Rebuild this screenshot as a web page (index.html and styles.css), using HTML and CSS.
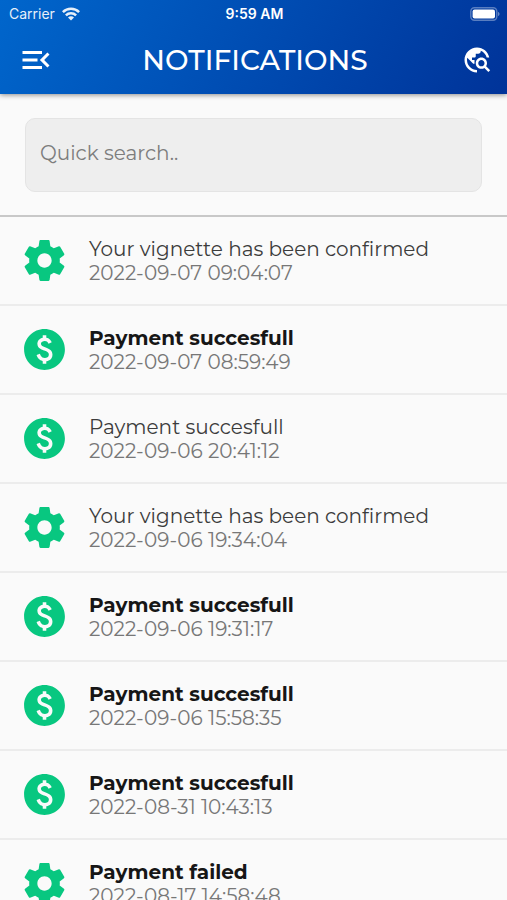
FILE: index.html
```html
<!DOCTYPE html>
<html lang="en">
<head>
<meta charset="utf-8">
<meta name="viewport" content="width=device-width, initial-scale=1">
<title>Notifications</title>
<link rel="stylesheet" href="styles.css">
</head>
<body>
<svg class="sprite" aria-hidden="true">
  <symbol id="gear" viewBox="0 0 24 24"><path d="M19.43 12.98c.04-.32.07-.64.07-.98s-.03-.66-.07-.98l2.11-1.65c.19-.15.24-.42.12-.64l-2-3.46c-.12-.22-.39-.3-.61-.22l-2.49 1c-.52-.4-1.08-.73-1.69-.98l-.38-2.65C14.46 2.18 14.25 2 14 2h-4c-.25 0-.46.18-.49.42l-.38 2.65c-.61.25-1.17.59-1.69.98l-2.49-1c-.23-.09-.49 0-.61.22l-2 3.46c-.13.22-.07.49.12.64l2.11 1.65c-.04.32-.07.65-.07.98s.03.66.07.98l-2.11 1.65c-.19.15-.24.42-.12.64l2 3.46c.12.22.39.3.61.22l2.49-1c.52.4 1.08.73 1.69.98l.38 2.65c.03.24.24.42.49.42h4c.25 0 .46-.18.49-.42l.38-2.65c.61-.25 1.17-.59 1.69-.98l2.49 1c.23.09.49 0 .61-.22l2-3.46c.12-.22.07-.49-.12-.64l-2.11-1.65zM12 15.5c-1.93 0-3.5-1.57-3.5-3.5s1.57-3.5 3.5-3.5 3.5 1.57 3.5 3.5-1.57 3.5-3.5 3.5z"/></symbol>
  <symbol id="paid" viewBox="0 0 24 24"><path d="M12 2C6.48 2 2 6.48 2 12s4.48 10 10 10 10-4.48 10-10S17.52 2 12 2zm.88 15.76V19h-1.75v-1.29c-.74-.18-2.39-.77-3.02-2.96l1.65-.67c.06.22.58 2.09 2.4 2.09.93 0 1.98-.48 1.98-1.61 0-.96-.7-1.46-2.28-2.03-1.1-.39-3.35-1.03-3.35-3.31 0-.1.01-2.4 2.62-2.96V5h1.75v1.24c1.84.32 2.51 1.79 2.66 2.23l-1.58.67c-.11-.35-.59-1.34-1.9-1.34-.7 0-1.81.37-1.81 1.39 0 .95.86 1.31 2.64 1.9 2.4.83 3.01 2.05 3.01 3.45 0 2.63-2.5 3.13-3.02 3.22z"/></symbol>
</svg>
<header class="top">
  <div class="status">
    <span class="carrier">Carrier
      <svg class="wifi" viewBox="0 0 18 14" aria-hidden="true"><g fill="none" stroke="#fff" stroke-width="2.5"><path d="M.9 5.2a11.4 11.4 0 0 1 16.2 0"/><path d="M3.9 8.4a7.2 7.2 0 0 1 10.2 0"/></g><path fill="#fff" d="M9 13.6 6 10.6a4.2 4.2 0 0 1 6 0z"/></svg>
    </span>
    <span class="clock">9:59 AM</span>
    <svg class="battery" viewBox="0 0 30 14" aria-hidden="true"><rect x=".8" y=".8" width="26" height="12.4" rx="3.6" fill="none" stroke="#fff" stroke-opacity=".35" stroke-width="1.4"/><rect x="2.6" y="2.6" width="22.4" height="8.8" rx="2" fill="#fff"/><path d="M28 5c2 .6 2 3.4 0 4z" fill="#fff" fill-opacity=".4"/></svg>
  </div>
  <div class="bar">
    <button class="icon-button" type="button" aria-label="Menu"><svg class="menu" viewBox="0 0 24 24"><path d="M3 18h13v-2H3v2zm0-5h10v-2H3v2zm0-7v2h13V6H3zm18 9.59L17.42 12 21 8.41 19.59 7l-5 5 5 5L21 15.59z"/></svg></button>
    <h1>NOTIFICATIONS</h1>
    <button class="icon-button end" type="button" aria-label="Explore"><svg class="explore" viewBox="0 0 24 24"><path d="M19.3 16.9c.4-.7.7-1.5.7-2.4 0-2.5-2-4.5-4.5-4.5S11 12 11 14.5s2 4.5 4.5 4.5c.9 0 1.7-.3 2.4-.7l3.2 3.2 1.4-1.4-3.2-3.2zm-3.8.1c-1.4 0-2.5-1.1-2.5-2.5s1.1-2.5 2.5-2.5 2.5 1.1 2.5 2.5-1.1 2.5-2.5 2.5zM12 20v2C6.48 22 2 17.52 2 12S6.48 2 12 2c4.84 0 8.87 3.44 9.8 8h-2.07c-.64-2.46-2.4-4.47-4.73-5.41V5c0 1.1-.9 2-2 2h-2v2c0 .55-.45 1-1 1H8v2h2v3H9l-4.79-4.79C4.08 10.79 4 11.38 4 12c0 4.41 3.59 8 8 8z"/></svg></button>
  </div>
</header>
<main>
  <form class="search"><input type="search" placeholder="Quick search.." aria-label="Quick search"></form>
  <ul class="list">
    <li><svg class="icon" aria-hidden="true"><use href="#gear"/></svg><div><p class="title">Your vignette has been confirmed</p><time>2022-09-07 09:04:07</time></div></li>
    <li class="unread"><svg class="icon" aria-hidden="true"><use href="#paid"/></svg><div><p class="title">Payment succesfull</p><time>2022-09-07 08:59:49</time></div></li>
    <li><svg class="icon" aria-hidden="true"><use href="#paid"/></svg><div><p class="title">Payment succesfull</p><time>2022-09-06 20:41:12</time></div></li>
    <li><svg class="icon" aria-hidden="true"><use href="#gear"/></svg><div><p class="title">Your vignette has been confirmed</p><time>2022-09-06 19:34:04</time></div></li>
    <li class="unread"><svg class="icon" aria-hidden="true"><use href="#paid"/></svg><div><p class="title">Payment succesfull</p><time>2022-09-06 19:31:17</time></div></li>
    <li class="unread"><svg class="icon" aria-hidden="true"><use href="#paid"/></svg><div><p class="title">Payment succesfull</p><time>2022-09-06 15:58:35</time></div></li>
    <li class="unread"><svg class="icon" aria-hidden="true"><use href="#paid"/></svg><div><p class="title">Payment succesfull</p><time>2022-08-31 10:43:13</time></div></li>
    <li class="unread"><svg class="icon" aria-hidden="true"><use href="#gear"/></svg><div><p class="title">Payment failed</p><time>2022-08-17 14:58:48</time></div></li>
  </ul>
</main>
</body>
</html>
```
FILE: styles.css
```css
* { box-sizing: border-box; }
html { height: 100%; }
body {
  margin: 0;
  height: 100%;
  display: flex;
  flex-direction: column;
  overflow: hidden;
  background: #fafafa;
  color: #3c3c3c;
  font-family: Montserrat, Inter, sans-serif;
}
.sprite { display: none; }
.top {
  flex: none;
  position: relative;
  color: #fff;
  background: linear-gradient(120deg, #0066cc, #003399);
  box-shadow: 0 1px 5px rgba(0, 0, 0, .45);
}
.status {
  display: grid;
  grid-template-columns: 1fr auto 1fr;
  align-items: center;
  height: 26px;
  padding: 2px 7px 0 9px;
  font: 14px/20px Inter, sans-serif;
}
.carrier { display: flex; align-items: center; gap: 7px; opacity: .9; }
.wifi { width: 18px; height: 14px; }
.clock { font-weight: 600; }
.battery { width: 30px; height: 14px; justify-self: end; }
.bar {
  display: grid;
  grid-template-columns: 1fr auto 1fr;
  align-items: center;
  height: 68px;
  padding: 0 15px 0 18px;
}
h1 { margin: 0; font-size: 28px; font-weight: 500; line-height: 36px; }
.icon-button {
  display: flex;
  justify-self: start;
  padding: 0;
  border: 0;
  background: none;
  color: inherit;
}
.end { justify-self: end; }
.icon-button svg { fill: currentColor; }
.menu { width: 36px; height: 36px; }
.explore { width: 30px; height: 30px; }
main { flex: 1; min-height: 0; overflow: hidden; }
.search { padding: 24px 25px 23px; border-bottom: 2px solid #c8c8c8; }
.search input {
  display: block;
  width: 100%;
  height: 74px;
  padding: 0 14px 4px;
  border: 1px solid #e4e4e4;
  border-radius: 10px;
  background: #eee;
  color: #3c3c3c;
  font: inherit;
  font-size: 20px;
  appearance: none;
}
.search input::placeholder { color: #7d7d7d; opacity: 1; }
.list { margin: 0; padding: 0; list-style: none; }
.list li {
  display: flex;
  align-items: center;
  gap: 20px;
  height: 89px;
  padding: 0 20px;
  border-bottom: 2px solid #ececec;
}
.icon { flex: none; width: 49px; height: 49px; fill: #08c780; }
.title { margin: 0; font-size: 20px; line-height: 24px; }
.unread .title { color: #161616; font-weight: 700; }
time { display: block; color: #777; font-size: 20px; line-height: 24px; }
```
